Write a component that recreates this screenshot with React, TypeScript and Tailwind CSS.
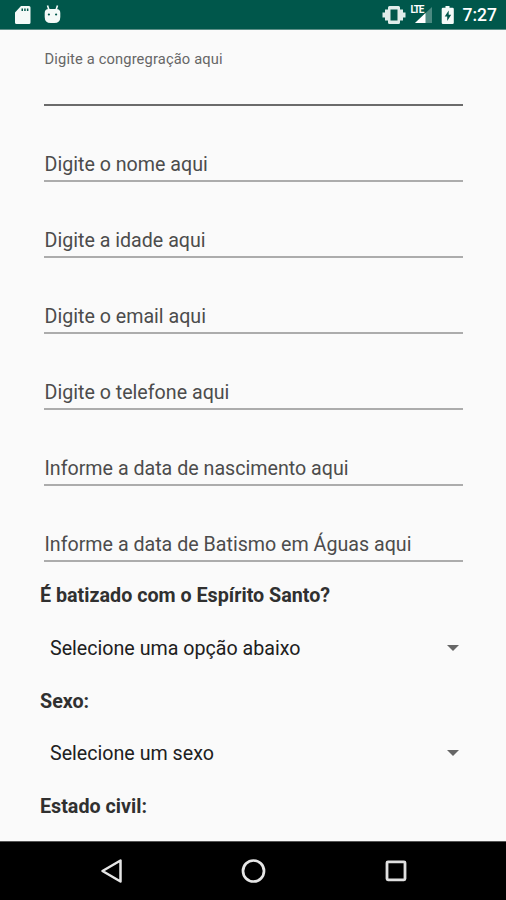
import React from 'react';

const fields = [
  'Digite o nome aqui',
  'Digite a idade aqui',
  'Digite o email aqui',
  'Digite o telefone aqui',
  'Informe a data de nascimento aqui',
  'Informe a data de Batismo em Águas aqui',
];

const selects = [
  { label: 'É batizado com o Espírito Santo?', value: 'Selecione uma opção abaixo' },
  { label: 'Sexo:', value: 'Selecione um sexo' },
];

function StatusBar() {
  return (
    <header className="flex h-[30px] shrink-0 items-center border-b border-[#5d8f87] bg-[#00574b] pr-[9px] pl-[14px] text-white">
      <svg width="17" height="20" viewBox="0 0 17 20" fill="#f4faf8">
        <path fillRule="evenodd" d="M7 1h8q1.500 0 1.500 1.500v15q0 1.500-1.500 1.500h-12.500q-1.500 0-1.500-1.500v-10zM7.500 3.500v2.500h1.500v-2.500zm2.700 0v2.500h1.500v-2.500zm2.700 0v2.500h1.500v-2.500z" />
      </svg>
      {/* Android head */}
      <svg className="ml-[13px]" width="17" height="20" viewBox="0 0 17 20" fill="#f4faf8">
        <path d="M3.500 0.500l1.500 4.500M13.500 0.500l-1.500 4.500" stroke="#f4faf8" strokeWidth="1.600" />
        <path fillRule="evenodd" d="M0.700 8q0-4 4-4h7.600q4 0 4 4v4q0 6-6 6h-3.600q-6 0-6-6zM3.800 9.500a1.100 1.100 0 1 0 2.200 0a1.100 1.100 0 1 0-2.200 0M11 9.500a1.100 1.100 0 1 0 2.200 0a1.100 1.100 0 1 0-2.200 0" />
      </svg>
      <div className="ml-auto flex items-center">
        <svg width="24" height="20" viewBox="0 0 24 20" fill="#e1edea">
          <path fillRule="evenodd" d="M7.500 1h9q1.500 0 1.500 1.500v15q0 1.500-1.500 1.500h-9q-1.500 0-1.500-1.500v-15q0-1.500 1.500-1.500zM8.500 4.500v11h7v-11z" />
          <path d="M3 4.500h3v11h-3zM0.500 7.500h2.500v5h-2.500zM18 4.500h3v11h-3zM21 7.500h2.500v5h-2.500z" />
        </svg>
        <div className="relative ml-[4px] h-[20px] w-[23px]">
          <svg width="23" height="20" viewBox="0 0 23 20">
            <path d="M22 2v16h-17z" fill="#4b8a81" />
            <path d="M15.500 8v10h-10.500z" fill="#fff" />
          </svg>
          <span className="absolute top-0 left-[1px] bg-[#00574b] text-[10px] leading-[10px] font-bold tracking-[-1.2px]">LTE</span>
        </div>
        <svg className="ml-[8px]" width="14" height="20" viewBox="0 0 14 20" fill="#f4faf8">
          <path fillRule="evenodd" d="M4.500 1h4v1.700h3q1.300 0 1.300 1.300v13.700q0 1.300-1.300 1.300h-9.500q-1.300 0-1.300-1.300v-13.700q0-1.300 1.300-1.300h2.500zM7.700 5.500l-4 6h2.500v4.500l4-6.200h-2.500z" />
        </svg>
        <span className="ml-[8px] pt-px text-[17.500px] leading-[20px] font-medium">7:27</span>
      </div>
    </header>
  );
}

function NavBar() {
  return (
    <nav className="flex h-[59px] shrink-0 items-center border-t border-[#555] bg-black pl-[100px]">
      <svg width="24" height="28" viewBox="0 0 24 28" fill="none" stroke="#e6e6e6" strokeWidth="2.500" strokeLinejoin="round">
        <path d="M20.500 3.500v21l-18-10.500z" />
      </svg>
      <svg className="ml-[116px]" width="28" height="28" viewBox="0 0 28 28" fill="none" stroke="#e6e6e6" strokeWidth="2.700">
        <circle cx="13.500" cy="14" r="10.500" />
      </svg>
      <svg className="ml-[114px]" width="28" height="28" viewBox="0 0 28 28" fill="none" stroke="#e0e0e0" strokeWidth="2.800">
        <rect x="5" y="4.800" width="18" height="18" rx="1" />
      </svg>
    </nav>
  );
}

export default function App() {
  return (
    <div className="flex h-[900px] w-[506px] flex-col overflow-hidden bg-[#fafafa] font-['Roboto',sans-serif]">
      <StatusBar />

      <main className="min-h-0 flex-1 overflow-hidden">
        <div className="mr-[43px] ml-[44px]">
          {/* Focused field, its hint is floated above the line */}
          <div className="h-[76px] border-b-2 border-[#6b6b6b] pt-[19px] pl-[0.5px] text-[14.700px] leading-[20px] tracking-[0.14px] text-[#666]">
            Digite a congregração aqui
          </div>
          {fields.map((field) => (
            <div
              key={field}
              className="flex h-[76px] items-end border-b-2 border-[#acacac] pb-[2px] pl-[0.5px] text-[19.650px] leading-[26px] text-[#4c4c4c]"
            >
              {field}
            </div>
          ))}
        </div>

        <div className="mr-[46px] ml-[40px] pt-[8px]">
          {selects.map((select) => (
            <div key={select.label} className="h-[105.500px]">
              <div className="text-[19.720px] leading-[52px] font-bold text-[#303030]">{select.label}</div>
              <div className="flex h-[53px] items-center justify-between pl-[10px] text-[19.650px] text-[#202020]">
                <span>{select.value}</span>
                <svg className="-mt-[2px]" width="14" height="8" viewBox="0 0 14 8" fill="#666">
                  <path d="M1 1h12l-6 6z" />
                </svg>
              </div>
            </div>
          ))}
          <div className="text-[19.720px] leading-[52px] font-bold text-[#303030]">Estado civil:</div>
        </div>
      </main>

      <NavBar />
    </div>
  );
}
